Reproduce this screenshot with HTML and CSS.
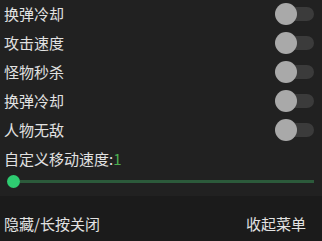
FILE: index.html
```html
<!DOCTYPE html>
<html>
<head>
<meta charset="utf-8">
<link rel="stylesheet" href="styles.css">
</head>
<body>
<div class="menu">
  <div class="list">
    <div class="row"><span class="label">换弹冷却</span><span class="switch"><span class="thumb"></span></span></div>
    <div class="row"><span class="label">攻击速度</span><span class="switch"><span class="thumb"></span></span></div>
    <div class="row"><span class="label">怪物秒杀</span><span class="switch"><span class="thumb"></span></span></div>
    <div class="row"><span class="label">换弹冷却</span><span class="switch"><span class="thumb"></span></span></div>
    <div class="row"><span class="label">人物无敌</span><span class="switch"><span class="thumb"></span></span></div>
    <div class="speed">自定义移动速度:<span class="val">1</span></div>
    <div class="slider"><span class="knob"></span><span class="track"></span></div>
  </div>
  <div class="footer">
    <span class="btn">隐藏/长按关闭</span>
    <span class="btn">收起菜单</span>
  </div>
</div>
</body>
</html>
```
FILE: styles.css
```css
html, body {
  margin: 0;
  padding: 0;
  width: 322px;
  height: 241px;
  overflow: hidden;
  background: #212121;
}
.menu {
  width: 322px;
  height: 241px;
  display: flex;
  flex-direction: column;
  font-family: "Noto Sans CJK SC", "Noto Sans", sans-serif;
  color: #e2e2e2;
  font-size: 15px;
}
.list {
  background: #212121;
  padding: 0 0 0 4px;
  height: 196px;
  box-sizing: border-box;
}
.row {
  height: 29px;
  display: flex;
  align-items: center;
  justify-content: space-between;
  padding-right: 8px;
}
.row:first-child {
  margin-top: -1px;
}
.label {
  line-height: 20px;
}
.switch {
  position: relative;
  width: 35px;
  height: 14px;
  border-radius: 7px;
  background: #3b3b3b;
  margin-top: 1px;
}
.thumb {
  position: absolute;
  left: -4px;
  top: -4px;
  width: 22px;
  height: 22px;
  border-radius: 50%;
  background: #a9a9a9;
}
.speed {
  height: 28px;
  line-height: 28px;
  margin-top: 1px;
}
.val {
  color: #4caf50;
}
.slider {
  display: flex;
  align-items: center;
  height: 16px;
  padding-left: 3px;
  padding-right: 8px;
}
.knob {
  width: 13px;
  height: 13px;
  border-radius: 50%;
  background: #2ecc71;
  flex: none;
}
.track {
  flex: 1;
  height: 3px;
  background: #2c5a3b;
}
.footer {
  flex: 1;
  background: #1b1b1b;
  display: flex;
  justify-content: space-between;
  align-items: center;
  padding: 10px 16px 0 4px;
}
```
